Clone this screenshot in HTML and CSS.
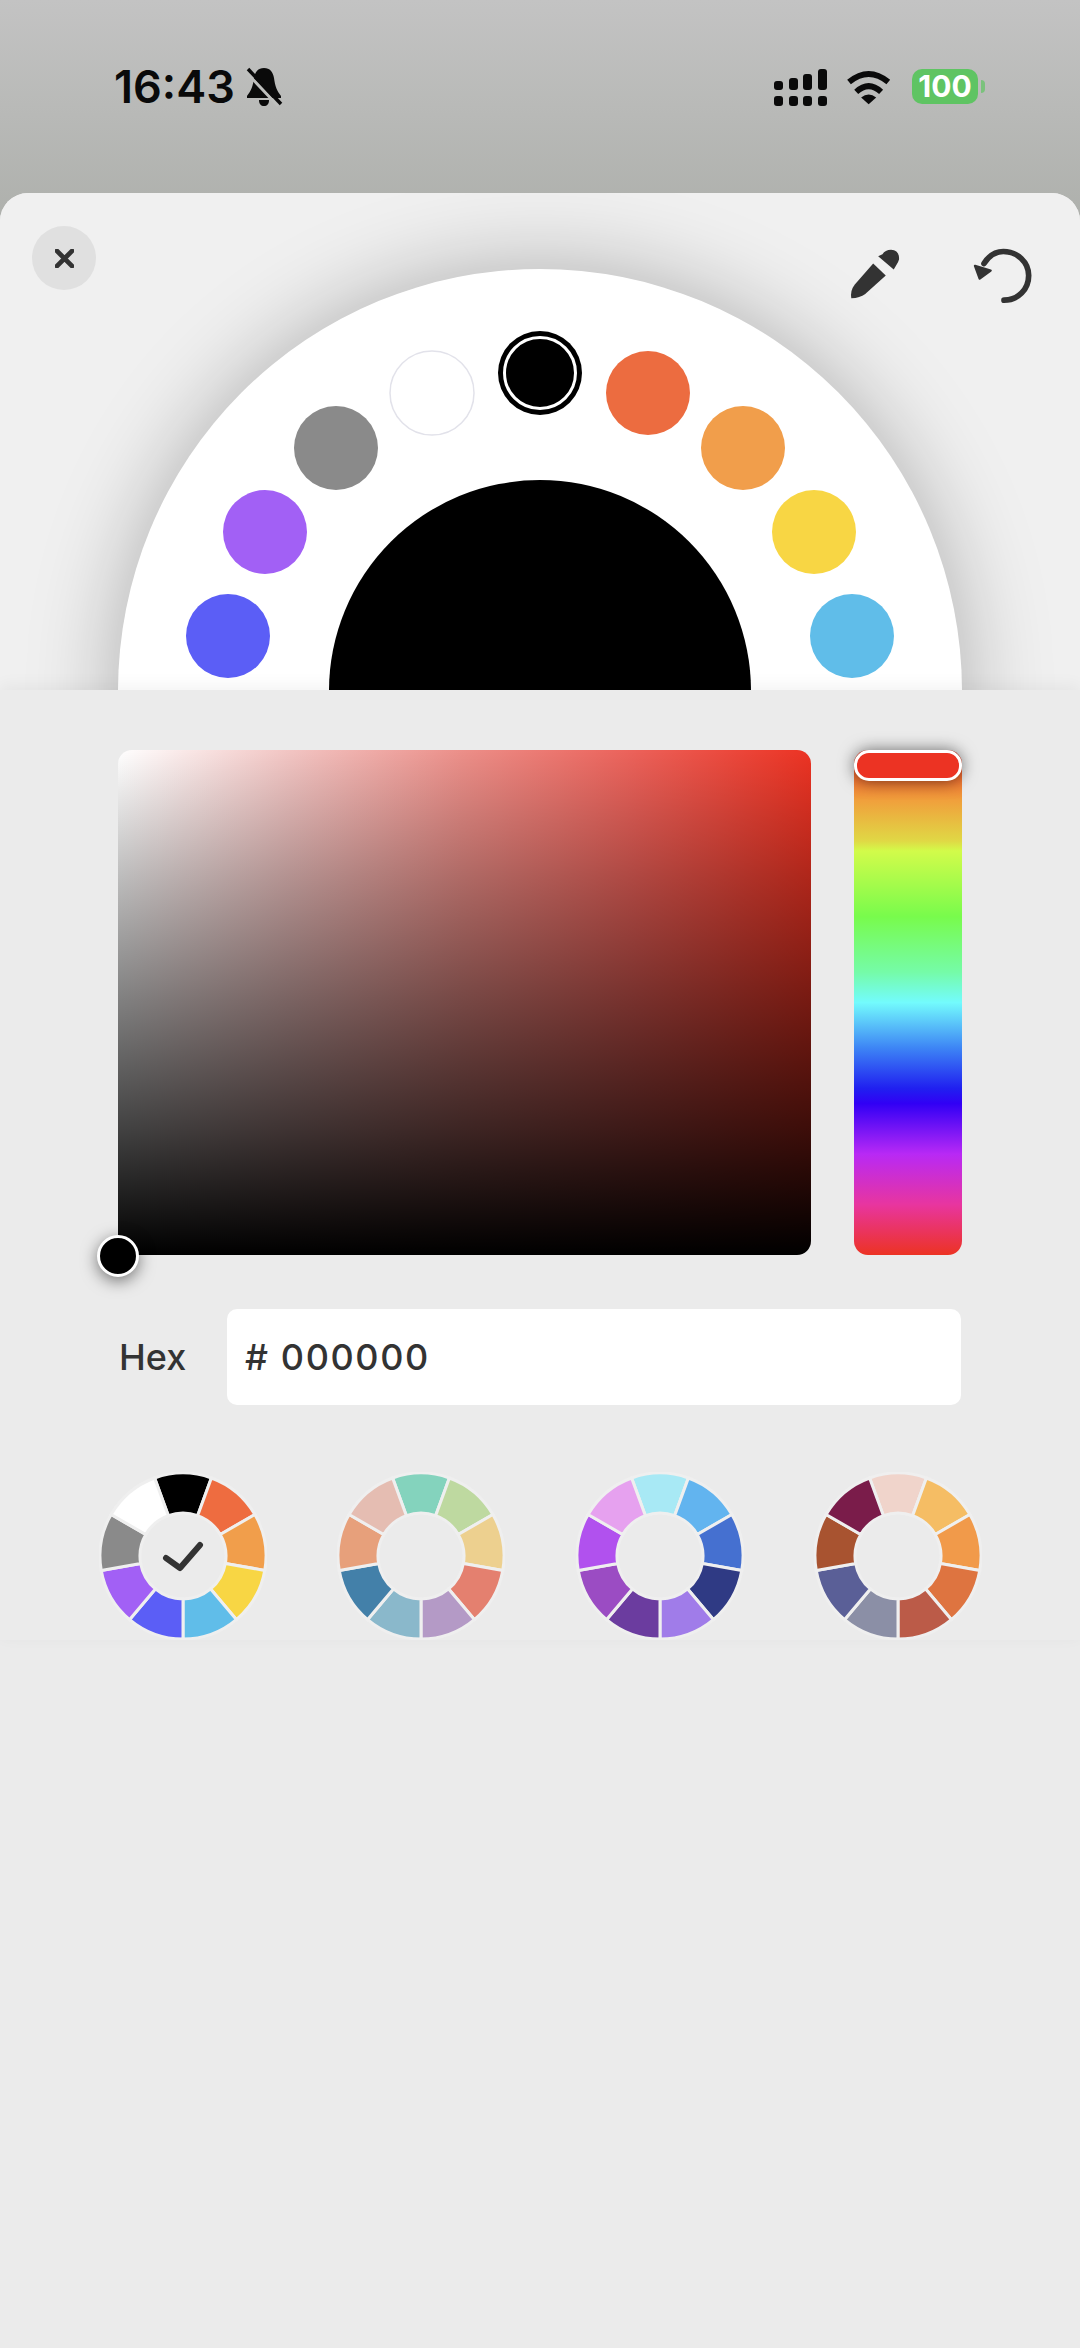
FILE: index.html
```html
<!DOCTYPE html>
<html lang="en">
<head>
  <meta charset="UTF-8">
  <title>Color picker</title>
  <link rel="stylesheet" href="styles.css">
</head>
<body>
  <div class="status">
    <div class="status-left">
      <span class="time">16:43</span>
      <svg class="bell" viewBox="0 0 36 40">
        <path d="M18 1C12 1 9 5 8 11C7 19 5 24 1 29V31H35V29C31 24 29 19 28 11C27 5 24 1 18 1Z"/>
        <path d="M13 33H23C23 37 21 39 18 39C15 39 13 37 13 33Z"/>
        <path class="bell-gap" d="M-1 4L32 39"/>
        <path class="bell-slash" d="M2 2L35 37"/>
      </svg>
    </div>
    <div class="status-right">
      <svg class="signal" viewBox="0 0 53 37">
        <rect x="0" y="12" width="9" height="9" rx="3"/>
        <rect x="15" y="9" width="9" height="12" rx="3"/>
        <rect x="29" y="5" width="9" height="16" rx="3"/>
        <rect x="44" y="0" width="9" height="21" rx="3"/>
        <rect x="0" y="27" width="9" height="10" rx="3"/>
        <rect x="15" y="27" width="9" height="10" rx="3"/>
        <rect x="29" y="27" width="9" height="10" rx="3"/>
        <rect x="44" y="27" width="9" height="10" rx="3"/>
      </svg>
      <svg class="wifi" viewBox="258 55 135 110">
        <path class="wifi-arc" d="M266 95Q326 46 386 95"/>
        <path class="wifi-arc" d="M288 125Q326 90 364 125"/>
        <path d="M303 142Q326 124 349 142L326 163Z"/>
      </svg>
      <div class="battery"><span>100</span></div>
    </div>
  </div>

  <div class="sheet">
    <div class="top">
      <div class="wheel">
        <svg class="wheel-svg" viewBox="-422 -422 844 422">
          <circle cx="0" cy="0" r="211" fill="#000"/>
          <circle cx="-312" cy="-55" r="42" fill="#5b5ef6"/>
          <circle cx="-275" cy="-159" r="42" fill="#a260f5"/>
          <circle cx="-204" cy="-243" r="42" fill="#8a8a8a"/>
          <circle cx="-108" cy="-298" r="42" fill="#fff" stroke="#e2e2ea" stroke-width="1.5"/>
          <circle cx="0" cy="-318" r="42" fill="#000"/>
          <circle cx="0" cy="-318" r="35.5" fill="none" stroke="#fff" stroke-width="3"/>
          <circle cx="108" cy="-298" r="42" fill="#ec6c40"/>
          <circle cx="203" cy="-243" r="42" fill="#f19e4b"/>
          <circle cx="274" cy="-159" r="42" fill="#f8d644"/>
          <circle cx="312" cy="-55" r="42" fill="#60bde9"/>
        </svg>
      </div>
      <div class="tools">
        <div class="close">
          <svg class="close-x" viewBox="0 0 20 20"><path d="M2 2L18 18M18 2L2 18"/></svg>
        </div>
        <svg class="dropper" viewBox="55 50 160 160">
          <path d="M143 78L156 72Q164 58 182 58Q208 60 206 88Q204 96 198 104L190 118Z"/>
          <path d="M128 100L166 136L104 192Q88 204 62 205Q58 182 72 164Z"/>
        </svg>
        <svg class="undo" viewBox="425 45 180 170">
          <path class="undo-arc" d="M518 204C560 204 592 172 592 130C592 90 558 58 516 58C490 58 472 72 458 94"/>
          <path class="undo-head" d="M431 101L478 115L445 139Z"/>
        </svg>
      </div>
    </div>

    <div class="panel">
      <div class="picker-row">
        <div class="sv">
          <div class="sv-thumb"></div>
        </div>
        <div class="hue">
          <div class="hue-thumb"></div>
        </div>
      </div>

      <div class="hex-row">
        <span class="hex-label">Hex</span>
        <div class="hex-input"># 000000</div>
      </div>

      <svg class="seg-defs" width="0" height="0">
        <defs>
          <path id="seg" d="M-14.71 -40.41L-28.39 -78A83 83 0 0 1 28.39 -78L14.71 -40.41A43 43 0 0 0 -14.71 -40.41Z"/>
        </defs>
      </svg>

      <div class="presets">
        <svg class="preset" viewBox="-84 -84 168 168">
          <use href="#seg" fill="#000"/>
          <use href="#seg" fill="#ee6c40" transform="rotate(40)"/>
          <use href="#seg" fill="#f19e4b" transform="rotate(80)"/>
          <use href="#seg" fill="#f8d644" transform="rotate(120)"/>
          <use href="#seg" fill="#60bde9" transform="rotate(160)"/>
          <use href="#seg" fill="#5b5ef6" transform="rotate(200)"/>
          <use href="#seg" fill="#a260f5" transform="rotate(240)"/>
          <use href="#seg" fill="#8a8a8a" transform="rotate(280)"/>
          <use href="#seg" fill="#fff" transform="rotate(320)"/>
          <path class="check" d="M-17 2L-3 12L17 -11"/>
        </svg>
        <svg class="preset" viewBox="-84 -84 168 168">
          <use href="#seg" fill="#84d3bd"/>
          <use href="#seg" fill="#bed9a0" transform="rotate(40)"/>
          <use href="#seg" fill="#edd08f" transform="rotate(80)"/>
          <use href="#seg" fill="#e4806f" transform="rotate(120)"/>
          <use href="#seg" fill="#b49ac6" transform="rotate(160)"/>
          <use href="#seg" fill="#8ab8cb" transform="rotate(200)"/>
          <use href="#seg" fill="#4380a9" transform="rotate(240)"/>
          <use href="#seg" fill="#e7a07b" transform="rotate(280)"/>
          <use href="#seg" fill="#e5bdb2" transform="rotate(320)"/>
        </svg>
        <svg class="preset" viewBox="-84 -84 168 168">
          <use href="#seg" fill="#a8e9f5"/>
          <use href="#seg" fill="#62b4ef" transform="rotate(40)"/>
          <use href="#seg" fill="#4570d0" transform="rotate(80)"/>
          <use href="#seg" fill="#2f3a84" transform="rotate(120)"/>
          <use href="#seg" fill="#a07ce9" transform="rotate(160)"/>
          <use href="#seg" fill="#6b3c9f" transform="rotate(200)"/>
          <use href="#seg" fill="#9b4cc3" transform="rotate(240)"/>
          <use href="#seg" fill="#b151ee" transform="rotate(280)"/>
          <use href="#seg" fill="#e6a1ef" transform="rotate(320)"/>
        </svg>
        <svg class="preset" viewBox="-84 -84 168 168">
          <use href="#seg" fill="#f0d4cb"/>
          <use href="#seg" fill="#f5bd64" transform="rotate(40)"/>
          <use href="#seg" fill="#f19a4a" transform="rotate(80)"/>
          <use href="#seg" fill="#de7440" transform="rotate(120)"/>
          <use href="#seg" fill="#bb5b48" transform="rotate(160)"/>
          <use href="#seg" fill="#8b8fa6" transform="rotate(200)"/>
          <use href="#seg" fill="#5a5f97" transform="rotate(240)"/>
          <use href="#seg" fill="#a85330" transform="rotate(280)"/>
          <use href="#seg" fill="#7a1c4a" transform="rotate(320)"/>
        </svg>
      </div>
    </div>
  </div>
</body>
</html>
```

FILE: styles.css
```css
html, body {
  margin: 0;
  padding: 0;
  height: 100%;
}
body {
  display: flex;
  flex-direction: column;
  overflow: hidden;
  font-family: Inter, "Liberation Sans", sans-serif;
  color: #333;
  background: #aeb0ac linear-gradient(#c3c3c3, #aeb0ac) no-repeat;
  background-size: 100% 220px;
}

/* status bar */
.status {
  height: 193px;
  flex: none;
  box-sizing: border-box;
  padding: 65px 102px 0 114px;
  display: flex;
  justify-content: space-between;
  align-items: flex-start;
}
.status-left {
  display: flex;
  align-items: center;
  gap: 11px;
}
.time {
  font-size: 45px;
  line-height: 44px;
  font-weight: 600;
  color: #0a0a0a;
}
.bell {
  width: 36px;
  height: 40px;
  fill: #0a0a0a;
  overflow: visible;
}
.bell-gap {
  fill: none;
  stroke: #bebfbd;
  stroke-width: 3;
}
.bell-slash {
  fill: none;
  stroke: #0a0a0a;
  stroke-width: 3.5;
}
.status-right {
  display: flex;
  align-items: flex-start;
  margin-top: 4px;
}
.signal {
  width: 53px;
  height: 37px;
  fill: #0a0a0a;
}
.wifi {
  width: 45px;
  height: 36px;
  margin-left: 19px;
  fill: #0a0a0a;
}
.wifi-arc {
  fill: none;
  stroke: #0a0a0a;
  stroke-width: 18;
}
.battery {
  width: 66px;
  height: 35px;
  margin-left: 21px;
  border-radius: 10px;
  background: #5fc463;
  color: #fff;
  font-size: 30px;
  line-height: 35px;
  font-weight: 700;
  text-align: center;
  position: relative;
}
.battery:after {
  content: "";
  position: absolute;
  left: 69px;
  top: 11px;
  width: 4px;
  height: 13px;
  border-radius: 0 4px 4px 0;
  background: #5fc463;
  opacity: .7;
}

/* sheet */
.sheet {
  flex: 1;
  border-radius: 28px 28px 0 0;
  overflow: hidden;
  background: #ebebeb;
}
.top {
  height: 497px;
  box-sizing: border-box;
  padding-top: 76px;
  background: #f0f0f0;
  position: relative;
  overflow: hidden;
}
.wheel {
  width: 844px;
  height: 844px;
  margin: 0 auto;
  border-radius: 50%;
  background: #fff;
  box-shadow: 0 0 90px rgba(0,0,0,.28);
}
.wheel-svg {
  display: block;
  width: 844px;
  height: 422px;
}
.tools {
  position: absolute;
  left: 32px;
  top: 33px;
  right: 47px;
  display: flex;
  align-items: flex-start;
}
.close {
  width: 64px;
  height: 64px;
  border-radius: 50%;
  background: #e0e0e0;
  display: flex;
  align-items: center;
  justify-content: center;
}
.close-x {
  width: 19px;
  height: 19px;
  fill: none;
  stroke: #333;
  stroke-width: 5;
  stroke-linecap: round;
}
.dropper {
  width: 53px;
  height: 53px;
  margin-left: auto;
  margin-top: 21px;
  fill: #333;
}
.undo {
  width: 60px;
  height: 57px;
  margin-left: 71px;
  margin-top: 21px;
}
.undo-arc {
  fill: none;
  stroke: #333;
  stroke-width: 17;
  stroke-linecap: round;
}
.undo-head {
  fill: #333;
  stroke: #333;
  stroke-width: 7;
  stroke-linejoin: round;
}

/* lower panel */
.panel {
  position: relative;
  padding-top: 60px;
  background: #ebebeb;
  box-shadow: 0 -4px 16px rgba(0,0,0,.05);
}
.picker-row {
  display: flex;
  gap: 43px;
  margin-left: 118px;
}
.sv {
  width: 693px;
  height: 505px;
  border-radius: 14px;
  background:
    linear-gradient(rgba(0,0,0,0), rgba(0,0,0,.26) 25%, rgba(0,0,0,.5) 50%, rgba(0,0,0,.74) 75%, #000),
    linear-gradient(90deg, #fff, #f2c4c2 25%, #ec8e88 50%, #ec6058 75%, #ec3323);
  position: relative;
}
.sv-thumb {
  position: absolute;
  left: -21px;
  bottom: -22px;
  width: 36px;
  height: 36px;
  border: 3px solid #fff;
  border-radius: 50%;
  background: #000;
  box-shadow: 0 4px 16px rgba(0,0,0,.5);
}
.hue {
  width: 108px;
  height: 505px;
  border-radius: 14px;
  background: linear-gradient(#ec3323 0%, #f0a03c 10%, #e0d845 18%, #d2fb4a 20%, #78fb4c 33%, #75fba8 44%, #73fbfd 50%, #3d85f5 59%, #2020f0 67%, #3100f5 70%, #b829f5 80%, #e8359f 90%, #ec3323 100%);
  position: relative;
}
.hue-thumb {
  position: absolute;
  left: 0;
  top: 0;
  box-sizing: border-box;
  width: 108px;
  height: 31px;
  border: 3px solid #fff;
  border-radius: 15px;
  background: #ec3323;
  box-shadow: 0 0 16px rgba(0,0,0,.55);
}
.hex-row {
  display: flex;
  align-items: center;
  margin: 54px 119px 0 119px;
}
.hex-label {
  width: 108px;
  font-size: 36px;
  font-weight: 500;
}
.hex-input {
  flex: 1;
  height: 96px;
  box-sizing: border-box;
  padding-left: 18px;
  background: #fff;
  border-radius: 10px;
  font-size: 36px;
  line-height: 96px;
  font-weight: 500;
  letter-spacing: 1.6px;
}
.seg-defs {
  display: block;
}
.presets {
  display: flex;
  gap: 70.5px;
  margin: 67px 0 0 98.5px;
}
.preset {
  width: 168px;
  height: 168px;
  flex: none;
  stroke: #efefef;
  stroke-width: 3;
}
.check {
  fill: none;
  stroke: #333;
  stroke-width: 6;
  stroke-linecap: round;
  stroke-linejoin: round;
}
```
